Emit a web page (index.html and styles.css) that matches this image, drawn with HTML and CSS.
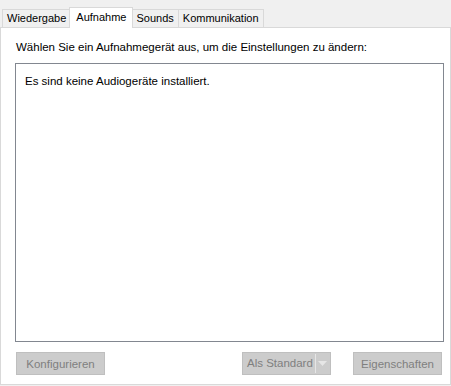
FILE: index.html
```html
<!DOCTYPE html>
<html>
<head>
    <title>Sound - Aufnahme</title>
    <link rel="stylesheet" href="styles.css">
</head>
<body>
    <div class="tabs">
        <div class="tab first">Wiedergabe</div>
        <div class="tab active">Aufnahme</div>
        <div class="tab">Sounds</div>
        <div class="tab">Kommunikation</div>
    </div>
    <div class="panel">
        <p class="prompt">Wählen Sie ein Aufnahmegerät aus, um die Einstellungen zu ändern:</p>
        <div class="device-list">
            <p class="empty">Es sind keine Audiogeräte installiert.</p>
        </div>
        <div class="actions">
            <button class="btn" disabled>Konfigurieren</button>
            <div class="spacer"></div>
            <div class="btn split">
                <span class="split-label">Als Standard</span>
                <span class="split-arrow">
                    <svg width="9" height="5" viewBox="0 0 9 5"><path d="M0 0h9L4.5 5z" fill="#e6e6e6"/></svg>
                </span>
            </div>
            <button class="btn props" disabled>Eigenschaften</button>
        </div>
    </div>
</body>
</html>
```

FILE: styles.css
```css
body {
    margin: 0;
    background-color: #f0f0f0;
    font-family: "Liberation Sans", Arial, sans-serif;
    font-size: 11.5px;
    color: #000;
}
.tabs {
    display: flex;
    align-items: flex-end;
    height: 27px;
    padding-left: 2px;
    font-size: 11px;
}
.tab {
    height: 17px;
    line-height: 17px;
    padding: 0 4px;
    border: 1px solid #d9d9d9;
    border-bottom: none;
    border-left: none;
    background-color: #f0f0f0;
}
.tab.first {
    border-left: 1px solid #d9d9d9;
}
.tab.active {
    position: relative;
    z-index: 1;
    height: 20px;
    line-height: 18px;
    margin: 0 -1px -1px -2px;
    padding: 0 6px;
    border-left: 1px solid #d9d9d9;
    background-color: #fff;
}
.panel {
    box-sizing: border-box;
    height: 358px;
    border: 1px solid #d9d9d9;
    background-color: #fff;
}
.prompt {
    margin: 11px 0 0 15px;
    line-height: 16px;
}
.device-list {
    box-sizing: border-box;
    width: 429px;
    height: 279px;
    margin: 8px 0 0 14px;
    border: 1px solid #828790;
    background-color: #fff;
}
.empty {
    margin: 9px 0 0 9px;
    line-height: 16px;
}
.actions {
    display: flex;
    margin-top: 10px;
    padding: 0 8px 0 15px;
}
.spacer {
    flex: 1;
}
.btn {
    box-sizing: border-box;
    width: 89px;
    height: 23px;
    padding: 0;
    border: 1px solid #bfbfbf;
    background-color: #cccccc;
    color: #7f7f7f;
    font-family: inherit;
    font-size: 11.5px;
    white-space: nowrap;
}
.props {
    margin-left: 22px;
}
.split {
    display: flex;
    align-items: center;
}
.split-label {
    flex: 1;
    padding-left: 4px;
    line-height: 21px;
}
.split-arrow {
    display: flex;
    align-items: center;
    justify-content: center;
    width: 13px;
    height: 19px;
    border-left: 1px solid #e6e6e6;
    margin-right: 1px;
}
```
